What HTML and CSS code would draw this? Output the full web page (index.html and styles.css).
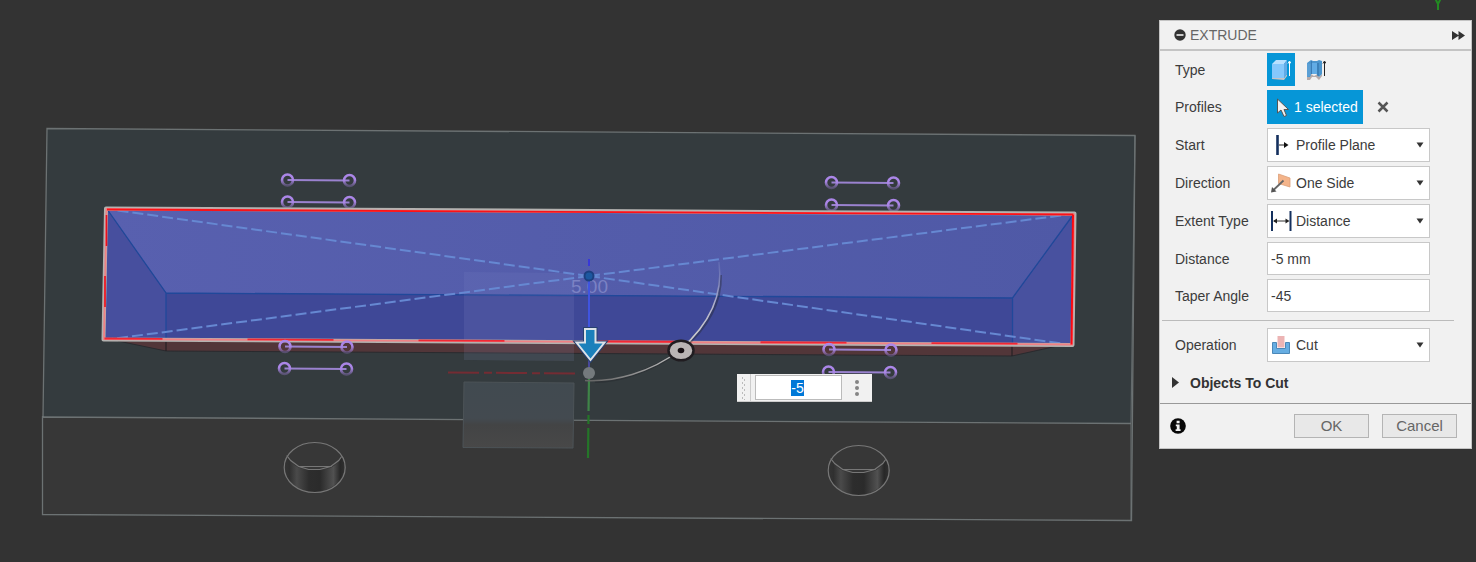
FILE: index.html
```html
<!DOCTYPE html>
<html lang="en">
<head>
<meta charset="utf-8">
<meta name="viewport" content="width=device-width, initial-scale=1">
<title>Extrude</title>
<link rel="stylesheet" href="styles.css">
</head>
<body>
<main class="workspace">
  <svg class="scene" viewBox="0 0 1476 562" preserveAspectRatio="xMinYMin slice" role="img" aria-label="Model view">
    <defs>
      <linearGradient id="bore" x1="0" x2="1" y1="0" y2="0">
        <stop offset="0" stop-color="#353535"/>
        <stop offset=".1" stop-color="#303030"/>
        <stop offset=".22" stop-color="#4a4a4a"/>
        <stop offset=".42" stop-color="#2d2d2d"/>
        <stop offset=".6" stop-color="#2b2b2b"/>
        <stop offset=".82" stop-color="#515151"/>
        <stop offset=".93" stop-color="#282828"/>
        <stop offset="1" stop-color="#303030"/>
      </linearGradient>
      <linearGradient id="ring" x1="0" x2="0" y1="0" y2="1">
        <stop offset=".4" stop-color="#ab86e8"/>
        <stop offset="1" stop-color="#ab86e8" stop-opacity=".3"/>
      </linearGradient>
      <linearGradient id="arc" gradientUnits="userSpaceOnUse" x1="590" y1="380" x2="720" y2="262">
        <stop offset="0" stop-color="#666"/>
        <stop offset=".35" stop-color="#aaa"/>
        <stop offset=".6" stop-color="#ccc"/>
        <stop offset=".8" stop-color="#b4b4cc"/>
        <stop offset="1" stop-color="#5c66b0"/>
      </linearGradient>
      <linearGradient id="topface" x1="0" x2="1" y1="0" y2="0">
        <stop offset="0" stop-color="#5860af"/>
        <stop offset="1" stop-color="#4f59a6"/>
      </linearGradient>
      <linearGradient id="plane" x1="0" x2="0" y1="0" y2="1">
        <stop offset="0" stop-color="#414a50"/>
        <stop offset=".55" stop-color="#434a50"/>
        <stop offset=".65" stop-color="#434445"/>
        <stop offset="1" stop-color="#484848"/>
      </linearGradient>
      <g id="link">
        <path d="M0 0L62 .5" stroke="#9a82cf" stroke-width="2"/>
        <circle r="5.5" fill="none" stroke="url(#ring)" stroke-width="2.6"/>
        <circle cx="62" cy=".5" r="5.5" fill="none" stroke="url(#ring)" stroke-width="2.6"/>
      </g>
      <g id="hole" fill="none" stroke="#777" stroke-width="1.2">
        <path d="M-28 -12C-20 3 -9 2.500 0 2.500S20 3 27 -11A30.500 25 0 1 1 -28 -12Z" fill="url(#bore)" stroke="none"/>
        <path d="M-28 -12L-24 -7L-16 -1L-6 2L5 2L16 -1L24 -7L27 -11M-16 -1H17"/>
        <ellipse rx="30.500" ry="25"/>
      </g>
    </defs>

    <path d="M47 128.500L1135 135.500L1131 423.500L43 417Z" fill="#343b3e"/>
    <path d="M43 417L1131 423.500V520.500L42.500 514.500Z" fill="#373737"/>
    <path d="M1135 135.500L1131 423.500V520.500" fill="none" stroke="#62696b" stroke-width="1.200"/>
    <path d="M43 417L47 128.500L1135 135.500L1131.500 520.500L42.500 514.500V417L1131 423.500" fill="none" stroke="#6c7273" stroke-width="1.300"/>

    <path d="M118 341L166 351L1012 356L1062 345Z" fill="#523639" stroke="#2a2a2e"/>
    <path d="M166 340V351M1012 345V356" stroke="#1c1c20"/>

    <path d="M106 208L1074 214L1012.500 298L166 293Z" fill="url(#topface)"/>
    <path d="M106 208L166 293V341L104 340Z" fill="#474f9e"/>
    <path d="M1074 214L1012.500 298V345L1072 346Z" fill="#48519f"/>
    <path d="M166 293L1012.500 298V345L166 340Z" fill="#3f4897"/>
    <path d="M107 209L166 293V340M166 293L1012.500 298L1073 215M1012.500 298V345" fill="none" stroke="#20489a" stroke-width="1.300"/>

    <path d="M464 272L574 273V361L464 360Z" fill="#a8b0e0" opacity=".08"/>
    <path d="M464 296L574 297V361L464 360Z" fill="#a8b0e0" opacity=".04"/>
    <path d="M464 382L574 383L573 448L463 447.500Z" fill="url(#plane)" stroke="#4c5357"/>

    <g fill="none" stroke="#6688d2" stroke-width="2" stroke-dasharray="11 4">
      <path d="M589 276L107 209"/><path d="M589 276L104 340"/>
      <path d="M589 276L1073 214"/><path d="M589 276L1072 345"/>
    </g>

    <g>
      <use href="#link" x="287.500" y="180"/><use href="#link" x="287.500" y="202"/>
      <use href="#link" x="831.500" y="182.500"/><use href="#link" x="831.500" y="205"/>
    </g>

    <path d="M106 208.500L1074.500 213.500L1072.500 345L103.500 339.500Z" fill="none" stroke="#b4b2b0" stroke-width="4" stroke-linejoin="round"/>
    <path d="M106.500 209L1074 214.500L1072 344.500L104 339Z" fill="none" stroke="#f08084" stroke-width="1.800"/>
    <path d="M107 209.500L1073.500 214.500" stroke="#fb1218" stroke-width="1.800"/>
    <path d="M1073 215L1071.500 344.500" stroke="#fb0a12" stroke-width="2"/>
    <path d="M106.500 215V246M105 276V307" stroke="#e8101c" stroke-width="1.600"/>
    <path d="M104.500 338.500L1071.500 344" stroke="#f02834" stroke-width="1.800" stroke-dasharray="86 85" stroke-dashoffset="28"/>

    <use href="#link" x="285" y="346.500"/><use href="#link" x="284.500" y="368.500"/>
    <use href="#link" x="829" y="349.500"/><use href="#link" x="828.500" y="372"/>
    <use href="#hole" x="314.700" y="467.500"/><use href="#hole" x="858.700" y="470.500"/>

    <text class="dimension" x="571" y="293">5.00</text>
    <path d="M589 259V266" stroke="#3838d8" stroke-width="2"/>
    <path d="M589 280V330" stroke="#4054e0" stroke-width="2"/>
    <path d="M589 358V368" stroke="#48489a" stroke-width="2"/>
    <circle cx="589" cy="276" r="4.500" fill="#1c58a0" stroke="#1c3f80" stroke-width="2"/>
    <path d="M448 372.500L580 373.500" stroke="#742c33" stroke-width="2" stroke-dasharray="31 5 8 4"/>
    <path d="M589 379L588.500 411" stroke="#3f8448" stroke-width="2.200"/>
    <path d="M588.500 415L588 458" stroke="#247528" stroke-width="2.200" stroke-dasharray="9 4 60"/>
    <path d="M720.500 275C721 300 711 325 681 350C650 373 614 382 595 381.500" fill="none" stroke="#22252b" stroke-width="3" opacity=".4"/>
    <path d="M719 262C723 292 712 322 680 350C650 373 614 382 585 380.500" fill="none" stroke="url(#arc)" stroke-width="1.500"/>
    <circle cx="589" cy="373" r="6" fill="#747a7d"/>
    <path d="M585 329H595.500V342.500H604.500L590.500 360L576.500 342.500H585Z" fill="#1b80bb" stroke="#284070" stroke-width="4"/>
    <path d="M585 329H595.500V342.500H604.500L590.500 360L576.500 342.500H585Z" fill="#1b80bb" stroke="#dce2e8" stroke-width="2"/>
    <ellipse cx="681" cy="350.500" rx="12.500" ry="9.800" fill="#bab4b4" stroke="#201c20" stroke-width="2.500"/>
    <ellipse cx="681" cy="350.500" rx="3.300" ry="2.700" fill="#181014"/>
    <path d="M1435 -2L1438 4L1441 -2M1438 4V10" fill="none" stroke="#228a22" stroke-width="2"/>
  </svg>

  <form class="quick-input" aria-label="Distance input">
    <svg class="grip" viewBox="0 0 18 28" aria-hidden="true">
      <path d="M5.500 3V26M7.500 5V26" stroke="#bbb" stroke-dasharray="2 3"/>
      <path d="M13.500 0V28" stroke="#ccc"/>
    </svg>
    <input class="quick-value" id="quick-distance" type="text" value="-5" aria-label="Distance">
    <button class="more" type="button" aria-label="More options">
      <svg viewBox="0 0 6 18" width="6" height="18" fill="#858585"><circle cx="3" cy="3" r="2"/><circle cx="3" cy="9" r="2"/><circle cx="3" cy="15" r="2"/></svg>
    </button>
  </form>

  <form class="panel" aria-labelledby="panel-title">
    <header class="panel-header">
      <button class="icon-button" type="button" aria-label="Collapse">
        <svg viewBox="0 0 12 12" width="12" height="12"><circle cx="6" cy="6" r="5.700" fill="#333"/><path d="M2.500 6H9.500" stroke="#f1f1f1" stroke-width="1.600"/></svg>
      </button>
      <h1 class="panel-title" id="panel-title">EXTRUDE</h1>
      <button class="icon-button" type="button" aria-label="Dock panel">
        <svg viewBox="0 0 13 9" width="13" height="9" fill="#333"><path d="M0 0L7 4.500L0 9ZM6.500 0L13 4.500L6.500 9Z"/></svg>
      </button>
    </header>

    <div class="rows">
      <div class="row">
        <span class="label" id="type-label">Type</span>
        <div class="types" role="group" aria-labelledby="type-label">
          <button class="type active" type="button" aria-pressed="true" aria-label="Extrude">
            <svg viewBox="0 0 20 22" width="20" height="22">
              <path d="M1 18L13 19L16 15V17L13 21L1 20Z" fill="#c8c4c4"/>
              <path d="M1 5L5 1H16L13 5Z" fill="#b8e0ff"/><path d="M1 5H13V19H1Z" fill="#86c8fc"/><path d="M13 5L16 1V15L13 19Z" fill="#62aae6"/>
              <path d="M18.500 17V3M17 4.500L18.500 2L20 4.500" fill="none" stroke="#fff"/>
            </svg>
          </button>
          <button class="type" type="button" aria-pressed="false" aria-label="Thin extrude">
            <svg viewBox="0 0 20 22" width="20" height="22">
              <path d="M1 18L5 15L8 17L12 15L13 18L16 15V17L13 21L10 18L6 18L4 21H1Z" fill="#b5aaaa"/>
              <path d="M1 4L5 1L7 2H11L13 1L16 2V15L13 18L10.500 15H5L4 18H1Z" fill="#4b95cd"/>
              <path d="M6 4H11V15H6Z" fill="#62ace5"/><path d="M1 4L4.500 5V17L1 18Z" fill="#5a9fd5"/><path d="M5.500 2V15" stroke="#3a7db8"/><path d="M12 4V17" stroke="#2c6ca5"/>
              <path d="M18.500 17V3M17 4.500L18.500 2L20 4.500" fill="none" stroke="#222"/>
            </svg>
          </button>
        </div>
      </div>

      <div class="row">
        <span class="label">Profiles</span>
        <div class="selection">
          <button class="selected" type="button">
            <svg viewBox="0 0 14 20" width="14" height="20"><path d="M1.500 2V16L5 13L8 19.500L10.500 18.500L8 12.500H12.500Z" fill="#f2f2f2" stroke="#555" stroke-width="1"/></svg>
            <span>1 selected</span>
          </button>
          <button class="icon-button" type="button" aria-label="Clear profiles">
            <svg viewBox="0 0 12 12" width="12" height="12"><path d="M1.500 1.500L10.500 10.500M10.500 1.500L1.500 10.500" stroke="#555" stroke-width="2.500"/></svg>
          </button>
        </div>
      </div>

      <div class="row">
        <label class="label" for="start">Start</label>
        <div class="choice">
          <svg class="choice-icon" viewBox="0 0 22 22"><path d="M7.500 1V21" stroke="#14305e" stroke-width="2.600"/><path d="M9 11H15" stroke="#222"/><path d="M14 8L18.500 11L14 14Z" fill="#111"/></svg>
          <select class="select" id="start"><option>Profile Plane</option></select>
          <svg class="caret" viewBox="0 0 8 6"><path d="M.5 .5H7.500L4 5.500Z" fill="#333"/></svg>
        </div>
      </div>
      <div class="row">
        <label class="label" for="direction">Direction</label>
        <div class="choice">
          <svg class="choice-icon" viewBox="0 0 22 22"><path d="M8.500 2L20 6V15L8.500 11.500Z" fill="#f4b48a" stroke="#dca078" stroke-width=".8"/><path d="M13.500 8.500L3.500 18" stroke="#666" stroke-width="1.800"/><path d="M1 20.500L2 15L6.500 19.500Z" fill="#555"/></svg>
          <select class="select" id="direction"><option>One Side</option></select>
          <svg class="caret" viewBox="0 0 8 6"><path d="M.5 .5H7.500L4 5.500Z" fill="#333"/></svg>
        </div>
      </div>
      <div class="row">
        <label class="label" for="extent">Extent Type</label>
        <div class="choice">
          <svg class="choice-icon" viewBox="0 0 22 22"><path d="M2 1V21M20.500 1V21" stroke="#14305e" stroke-width="2"/><path d="M4 11H18" stroke="#333"/><path d="M3 11L7 8.500V13.500ZM19.500 11L15.500 8.500V13.500Z" fill="#222"/></svg>
          <select class="select" id="extent"><option>Distance</option></select>
          <svg class="caret" viewBox="0 0 8 6"><path d="M.5 .5H7.500L4 5.500Z" fill="#333"/></svg>
        </div>
      </div>
      <div class="row">
        <label class="label" for="distance">Distance</label>
        <input class="field" id="distance" type="text" value="-5 mm">
      </div>
      <div class="row">
        <label class="label" for="taper">Taper Angle</label>
        <input class="field" id="taper" type="text" value="-45">
      </div>
    </div>

    <hr class="divider">

    <div class="rows operation">
      <div class="row">
        <label class="label" for="operation">Operation</label>
        <div class="choice">
          <svg class="choice-icon" viewBox="0 0 22 22"><path d="M2.500 8.500H6.500V14.500H15.500V8.500H19.500V19.500H2.500Z" fill="#66ade2" stroke="#4b88b8"/><path d="M7.500 2H14.500V13.500H7.500Z" fill="#ecb4b4"/></svg>
          <select class="select" id="operation"><option>Cut</option></select>
          <svg class="caret" viewBox="0 0 8 6"><path d="M.5 .5H7.500L4 5.500Z" fill="#333"/></svg>
        </div>
      </div>
    </div>

    <button class="expander" type="button" aria-expanded="false">
      <svg viewBox="0 0 7 11" width="7" height="11"><path d="M0 0L7 5.500L0 11Z" fill="#333"/></svg>
      <span>Objects To Cut</span>
    </button>

    <footer class="panel-footer">
      <button class="icon-button info" type="button" aria-label="Information">
        <svg viewBox="0 0 16 16" width="16" height="16"><circle cx="8" cy="8" r="7.800" fill="#080808"/><path d="M6.600 2.800H9.600V5.200H6.600ZM5.800 6.500H9.600V11.200H10.600V13H5.600V11.200H6.800V8.200H5.800Z" fill="#f1f1f1"/></svg>
      </button>
      <button class="action" type="button">OK</button>
      <button class="action" type="button">Cancel</button>
    </footer>
  </form>
</main>
<script src="script.js"></script>
</body>
</html>
```

FILE: styles.css
```css
* {
  box-sizing: border-box;
}

body {
  margin: 0;
  background: #333;
  color: #3c3c3c;
  font-family: "Liberation Sans", Arial, sans-serif;
  font-size: 14px;
  line-height: 16px;
}

button,
input,
select {
  margin: 0;
  font: inherit;
  color: inherit;
}

button {
  padding: 0;
  border: 0;
  background: none;
}

svg {
  display: block;
}

.workspace {
  position: relative;
  min-height: 100vh;
  overflow: hidden;
}

.scene {
  width: 100%;
  height: 100vh;
}

.dimension {
  font-size: 19px;
  fill: #7b82c4;
}

.quick-input {
  position: absolute;
  top: 374px;
  left: 737px;
  display: flex;
  align-items: center;
  height: 28px;
  background: #f1f1f1;
  border-bottom: 1px solid #ccc;
}

.grip {
  width: 18px;
  height: 28px;
}

.quick-value {
  width: 87px;
  height: 25px;
  padding: 0 2px 0 0;
  border: 1px solid #bbb;
  outline: 0;
  background: #fff;
  text-align: center;
}

.quick-value::selection {
  background: #0078d7;
  color: #fff;
}

.more {
  display: grid;
  place-items: center;
  width: 30px;
}

.panel {
  position: absolute;
  top: 20px;
  right: 4px;
  width: 313px;
  background: #f1f1f1;
  border: 1px solid #c4c4c4;
}

.panel-header {
  display: flex;
  align-items: center;
  height: 30px;
  padding: 0 6px 0 14px;
  border-bottom: 2px solid #c4c4c4;
}

.panel-title {
  flex: 1;
  margin: 0 0 0 4px;
  font-size: 14px;
  font-weight: 400;
  color: #666;
}

.rows {
  display: grid;
  gap: 4px;
  padding: 2px 41px 0 15px;
}

.row {
  display: grid;
  grid-template-columns: 92px 1fr;
  align-items: center;
}

.types {
  display: flex;
  gap: 7px;
}

.type {
  display: grid;
  place-items: center;
  width: 28px;
  height: 33px;
}

.active,
.selected {
  background: #0696d7;
}

.selection {
  display: flex;
  align-items: center;
  gap: 14px;
}

.selected {
  display: flex;
  align-items: center;
  gap: 4px;
  height: 34px;
  padding: 0 5px 0 9px;
  color: #fff;
}

.choice {
  display: grid;
  grid-template-columns: 24px 1fr 14px;
  align-items: center;
  height: 34px;
}

.select {
  grid-area: 1 / 1 / 2 / 4;
  width: 100%;
  height: 100%;
  padding: 0 20px 0 28px;
  border: 1px solid #c8c8c8;
  border-radius: 0;
  background: #fff;
  appearance: none;
}

.choice-icon {
  grid-area: 1 / 1;
  z-index: 1;
  width: 22px;
  height: 22px;
  margin-left: 3px;
  pointer-events: none;
}

.caret {
  grid-area: 1 / 3;
  z-index: 1;
  width: 8px;
  height: 6px;
  pointer-events: none;
}

.field {
  width: 100%;
  height: 33px;
  padding: 0 3px;
  border: 1px solid #c8c8c8;
  background: #fff;
}

.divider {
  height: 1px;
  margin: 8px 17px 0 2px;
  border: 0;
  background: #bbb;
}

.operation {
  padding-top: 7px;
}

.expander {
  display: flex;
  align-items: center;
  gap: 11px;
  height: 41px;
  padding-left: 12px;
  font-weight: 700;
  color: #333;
}

.panel-footer {
  display: flex;
  align-items: center;
  gap: 13px;
  height: 45px;
  padding: 0 14px 0 10px;
  border-top: 1px solid #999;
}

.info {
  margin-right: auto;
}

.action {
  width: 75px;
  height: 24px;
  border: 1px solid #b4b4b4;
  background: #e8e8e8;
  font-size: 15px;
  color: #666;
}
```

FILE: script.js
```js
const quickDistance = document.getElementById("quick-distance");
quickDistance.focus();
quickDistance.select();
```
